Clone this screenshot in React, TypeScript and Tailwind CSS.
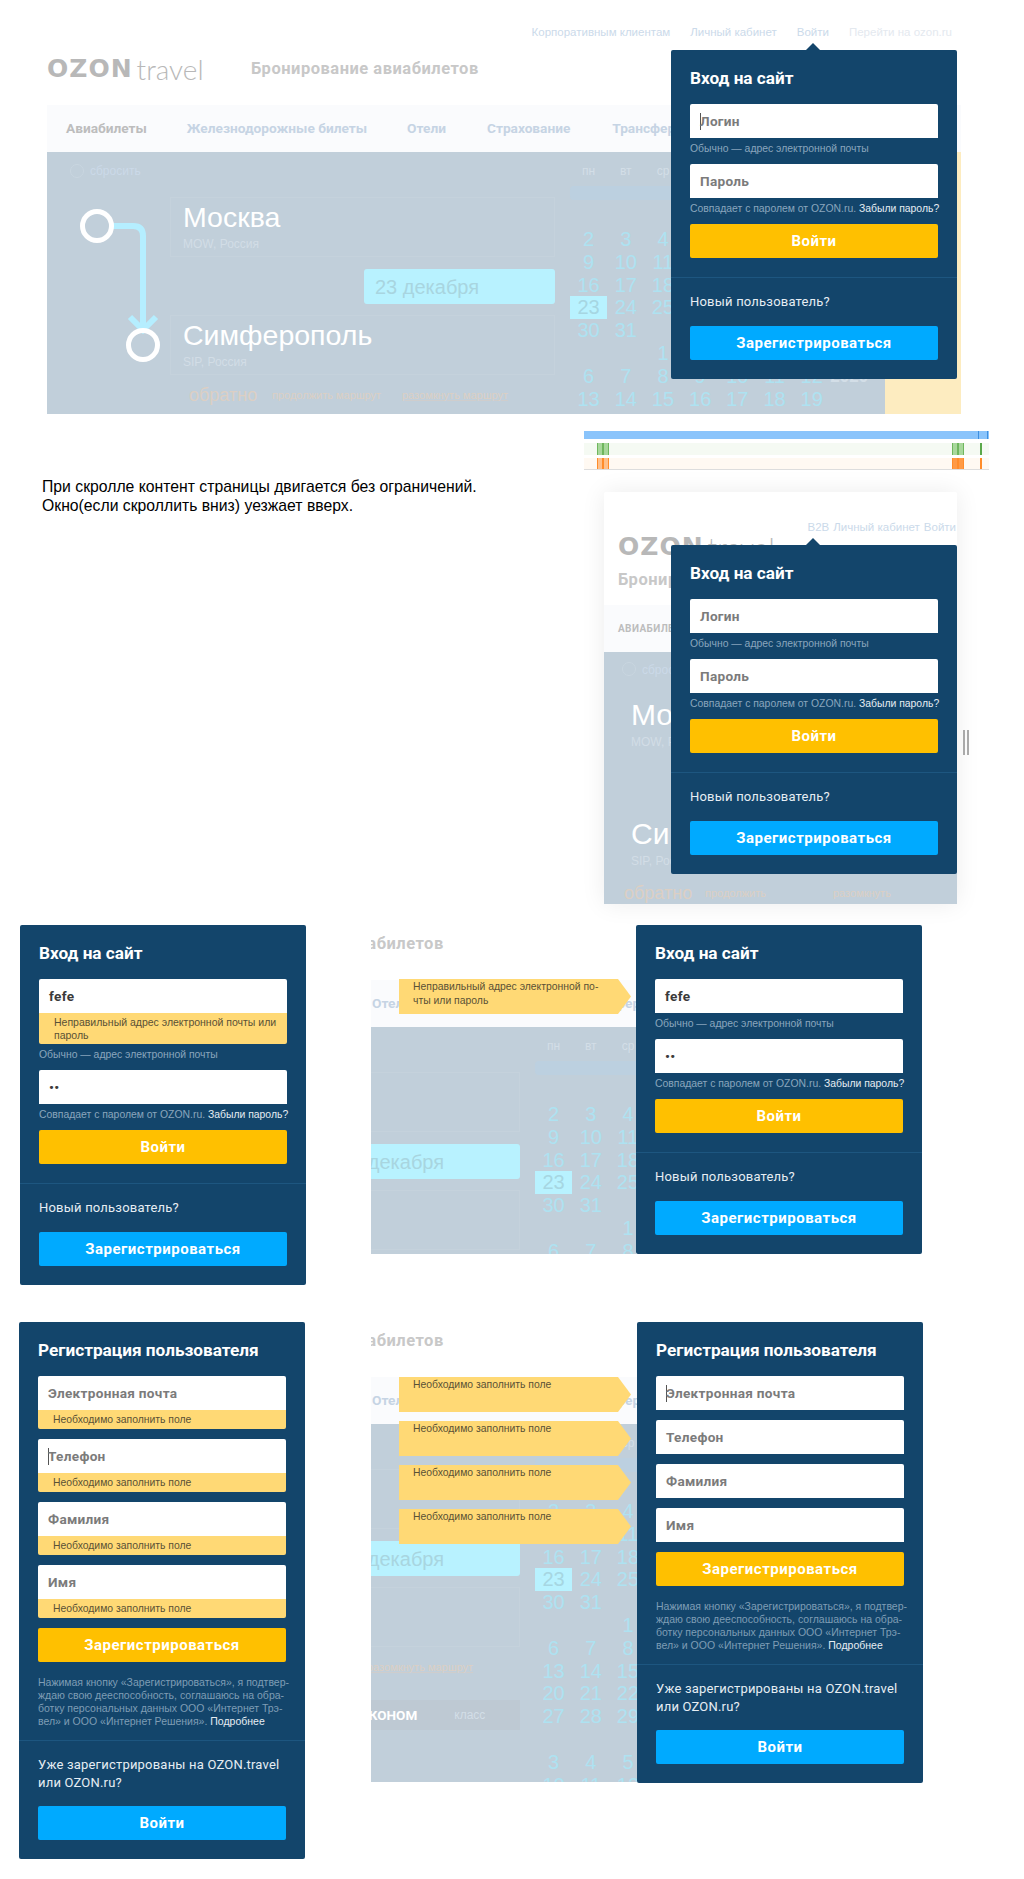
const WEEKDAYS = ["пн", "вт", "ср", "чт", "пт", "сб", "вс"];

const CALENDAR_ROWS: (string | number)[][] = [
  [2, 3, 4, 5, 6, 7, 8],
  [9, 10, 11, 12, 13, 14, 15],
  [16, 17, 18, 19, 20, 21, 22],
  [23, 24, 25, 26, 27, 28, 29],
  [30, 31, "", "", "", "", ""],
  ["", "", 1, 2, 3, 4, 5],
  [6, 7, 8, 9, 10, 11, 12, "2020"],
  [13, 14, 15, 16, 17, 18, 19],
  [20, 21, 22, 23, 24, 25, 26],
  [27, 28, 29, 30, 31, "", ""],
  ["", "", "", "", "", "", ""],
  [3, 4, 5, 6, 7, 8, 9],
  [10, 11, 12, 13, 14, 15, 16],
];

function Logo() {
  return (
    <div className="flex w-[204px] items-center">
      <span className="font-['DejaVu_Sans',sans-serif] text-[25px] leading-8 font-bold tracking-[1px] text-[#b8b8b8]">
        OZON
      </span>
      <span className="ml-[4px] font-[Lato,sans-serif] text-[28px] leading-8 font-light text-[#b8b8b8]">
        travel
      </span>
    </div>
  );
}

function TopLinks() {
  return (
    <div className="flex justify-end gap-5 pt-6 pr-[9px] font-['Liberation_Sans',sans-serif] text-[11.5px] leading-4 text-[#cbdaea]">
      <span>Корпоративным клиентам</span>
      <span>Личный кабинет</span>
      <span>Войти</span>
      <span className="text-[#e4e9ef]">Перейти на ozon.ru</span>
    </div>
  );
}

function RouteLine() {
  return (
    <svg width="123" height="190" viewBox="0 0 123 190" fill="none" className="shrink-0">
      <path d="M62 29h24q10 0 10 10v92" stroke="#b5eeff" strokeWidth="6" />
      <path d="M83 120l13 13 13-13" stroke="#b5eeff" strokeWidth="6" />
      <circle cx="50" cy="29" r="14.5" stroke="#fff" strokeWidth="5" />
      <circle cx="96" cy="148" r="14.5" stroke="#fff" strokeWidth="5" />
    </svg>
  );
}

function CityField({ city, sub, height }: { city: string; sub: string; height: string }) {
  return (
    <div className={`border border-[#c5d2dc] px-[12px] pt-[1px] font-['Liberation_Sans',sans-serif] ${height}`}>
      <div className="text-[28.5px] leading-9 text-white">{city}</div>
      <div className="mt-[1px] text-xs leading-4 text-[#d2dde6]">{sub}</div>
    </div>
  );
}

function Calendar() {
  return (
    <div className="w-[315px] shrink-0 font-['Liberation_Sans',sans-serif]">
      <div className="grid h-7 grid-cols-[repeat(8,37.2px)] pt-[10px] text-center text-xs leading-[18px] text-[#d3dee7]">
        {WEEKDAYS.map((day) => (
          <span key={day}>{day}</span>
        ))}
      </div>
      <div className="mt-[6px] h-[14px] w-[315px] rounded-sm bg-[#bcd0e0]" />
      <div className="mt-[28px]">
        {CALENDAR_ROWS.map((row, rowIndex) => (
          <div
            key={rowIndex}
            className="grid h-[22.8px] grid-cols-[repeat(8,37.2px)] text-center text-[20px] leading-[23px] text-[#aee2f1]"
          >
            {row.map((cell, cellIndex) => (
              <span
                key={cellIndex}
                className={
                  cell === "2020"
                    ? "text-[17px] font-bold text-[#d3dee7]"
                    : rowIndex === 3 && cell === 23
                      ? "bg-[#b8f2ff] text-[#a6d6e2]"
                      : ""
                }
              >
                {cell}
              </span>
            ))}
          </div>
        ))}
      </div>
    </div>
  );
}

// the same backdrop page, cropped differently behind each login panel
function Page() {
  return (
    <div className="w-[914px] font-[Roboto,sans-serif]">
      <div className="h-[105px]">
        <TopLinks />
        <div className="mt-[13px] flex h-8 items-center">
          <Logo />
          <span className="text-[16.5px] font-bold tracking-[0.5px] text-[#c8c8c8]">Бронирование авиабилетов</span>
        </div>
      </div>
      <div className="flex h-[47px] items-center gap-[38px] bg-[#fafbfd] pl-[19px] text-[13.7px] font-bold whitespace-nowrap text-[#c6d4e4]">
        <span className="mr-[2px] text-[#bdbdbd]">Авиабилеты</span>
        <span className="mr-[2px]">Железнодорожные билеты</span>
        <span className="mr-[3px]">Отели</span>
        <span className="mr-[4px]">Страхование</span>
        <span>Трансфер</span>
      </div>
      <div className="flex h-[500px] bg-[#c1cfda]">
        <div className="w-[523px] shrink-0">
          <div className="flex h-[45px] items-start gap-[6px] pt-3 pl-[23px] font-['Liberation_Sans',sans-serif] text-xs leading-[14px] text-[#cbd9e8]">
            <span className="size-[14px] rounded-full border border-[#c9d6e0]" />
            <span>сбросить</span>
          </div>
          <div className="flex">
            <RouteLine />
            <div className="w-[385px]">
              <CityField city="Москва" sub="MOW, Россия" height="h-[60px]" />
              <div className="mt-3 ml-auto flex h-[35px] w-[191px] items-center rounded-[3px] bg-[#b8f2ff] pl-[11px] font-['Liberation_Sans',sans-serif] text-xl text-[#a8d5e0]">
                23 декабря
              </div>
              <div className="mt-[11px]">
                <CityField city="Симферополь" sub="SIP, Россия" height="h-[60px]" />
              </div>
              <div className="mt-[10px] flex h-5 items-center pl-[19px] font-['Liberation_Sans',sans-serif] text-[11px] text-[#dccfc4]">
                <span className="w-[83px] text-lg">обратно</span>
                <span className="w-[130px]">продолжить маршрут</span>
                <span className="underline decoration-[#cfcdcc]">разомкнуть маршрут</span>
              </div>
              <div className="mt-[23px] flex h-[30px] items-center bg-[#bec9d3] pl-[225px]">
                <span className="text-[13.5px] font-bold text-white">ЭКОНОМ</span>
                <span className="ml-[37px] font-['Liberation_Sans',sans-serif] text-xs text-[#d3dee7]">класс</span>
              </div>
            </div>
          </div>
        </div>
        <Calendar />
        <div className="flex-1 bg-[#fdecc0]" />
      </div>
    </div>
  );
}

function PanelInput({ label, value, cursor }: { label?: string; value?: string; cursor?: boolean }) {
  return (
    <div className="flex h-[34px] items-center rounded-t-[2px] bg-white pl-[10px] text-[13.6px] font-bold tracking-[0.3px]">
      {cursor && <span className="-mr-[1px] h-[17px] w-[1px] bg-[#555]" />}
      <span className={value ? "text-[#3a3a3a]" : "text-[#7b7b7b]"}>{value ?? label}</span>
    </div>
  );
}

function PanelButton({ label, color }: { label: string; color: string }) {
  return (
    <div className={`flex h-[34px] items-center justify-center rounded-[2px] text-[15px] font-bold tracking-[0.5px] text-white ${color}`}>
      {label}
    </div>
  );
}

function Hint({ children }: { children: React.ReactNode }) {
  return (
    <div className="h-[26px] pt-[3px] font-['Liberation_Sans',sans-serif] text-[10.4px] leading-4 whitespace-nowrap text-[#8aa6bd]">
      {children}
    </div>
  );
}

function LoginPanel({
  login,
  password,
  error,
  cursor,
}: {
  login?: string;
  password?: string;
  error?: boolean;
  cursor?: boolean;
}) {
  return (
    <div className="w-[286px] rounded-[2px] bg-[#13456b]">
      <div className="px-[19px]">
        <div className="pt-[15px] pb-[13px] text-[17.2px] leading-[26px] font-bold text-white">Вход на сайт</div>
        <PanelInput label="Логин" value={login} cursor={cursor} />
        {error && (
          <div className="h-[31px] rounded-b-[2px] bg-[#ffd975] pl-[15px] font-['Liberation_Sans',sans-serif] text-[10.5px] leading-[13px] whitespace-nowrap text-[#5a5136]">
            <div className="pt-[3px]">
              Неправильный адрес электронной почты или
              <br />
              пароль
            </div>
          </div>
        )}
        <Hint>Обычно — адрес электронной почты</Hint>
        <PanelInput label="Пароль" value={password} />
        <Hint>
          Совпадает с паролем от OZON.ru. <span className="text-[#e6edf3]">Забыли пароль?</span>
        </Hint>
        <PanelButton label="Войти" color="bg-[#ffc000]" />
      </div>
      <div className="mt-[19px] border-t border-[#1d5680] px-[19px] pt-[14px] pb-[19px]">
        <div className="text-[13px] leading-5 tracking-[0.2px] text-[#e6edf3]">Новый пользователь?</div>
        <div className="mt-[14px]">
          <PanelButton label="Зарегистрироваться" color="bg-[#00aaff]" />
        </div>
      </div>
    </div>
  );
}

const REGISTER_FIELDS = ["Электронная почта", "Телефон", "Фамилия", "Имя"];

function RegisterPanel({ withErrors, cursorIndex }: { withErrors?: boolean; cursorIndex: number }) {
  return (
    <div className="w-[286px] rounded-[2px] bg-[#13456b]">
      <div className="px-[19px]">
        <div className="pt-[15px] pb-[13px] text-[17.2px] leading-[26px] font-bold text-white">
          Регистрация пользователя
        </div>
        {REGISTER_FIELDS.map((field, index) => (
          <div key={field} className="mb-[10px]">
            <PanelInput label={field} cursor={index === cursorIndex} />
            {withErrors && (
              <div className="h-[19px] rounded-b-[2px] bg-[#ffd975] pl-[15px] font-['Liberation_Sans',sans-serif] text-[10.4px] leading-[19px] text-[#5a5136]">
                Необходимо заполнить поле
              </div>
            )}
          </div>
        ))}
        <PanelButton label="Зарегистрироваться" color="bg-[#ffc000]" />
        <div className="mt-[14px] font-['Liberation_Sans',sans-serif] text-[10.5px] leading-[13px] whitespace-nowrap text-[#7f9db5]">
          Нажимая кнопку «Зарегистрироваться», я подтвер-
          <br />
          ждаю свою дееспособность, соглашаюсь на обра-
          <br />
          ботку персональных данных ООО «Интернет Трэ-
          <br />
          вел» и ООО «Интернет Решения». <span className="text-[#e6edf3]">Подробнее</span>
        </div>
      </div>
      <div className="mt-3 border-t border-[#1d5680] px-[19px] pt-[15px] pb-[19px]">
        <div className="text-[13px] leading-[18px] tracking-[0.2px] whitespace-nowrap text-[#e6edf3]">
          Уже зарегистрированы на OZON.travel
          <br />
          или OZON.ru?
        </div>
        <div className="mt-[14px]">
          <PanelButton label="Войти" color="bg-[#00aaff]" />
        </div>
      </div>
    </div>
  );
}

function ErrorTip({ children }: { children: React.ReactNode }) {
  return (
    <div className="h-[35px] w-[232px] bg-[#ffd975] pt-[1px] pl-[14px] font-['Liberation_Sans',sans-serif] text-[10.4px] leading-[14px] text-[#5a5136] [clip-path:polygon(0_0,calc(100%-13px)_0,100%_50%,calc(100%-13px)_100%,0_100%)]">
      {children}
    </div>
  );
}

function TimelineMark({ fill, stripe }: { fill: string; stripe: string }) {
  return (
    <span className={`flex w-3 justify-between ${fill}`}>
      <span className={`w-[1px] ${stripe}`} />
      <span className={`w-[2px] ${stripe}`} />
      <span className={`w-[1px] ${stripe}`} />
    </span>
  );
}

function Timeline() {
  return (
    <div className="w-[405px]">
      <div className="flex h-2 justify-end gap-[8px] bg-[#8ac4fb] pr-[1px]">
        <span className="w-[1px] bg-[#3d8fe0]" />
        <span className="w-[1px] bg-[#3d8fe0]" />
      </div>
      <div className="mt-1 flex h-3 bg-[#f5faf3]">
        <span className="ml-[13px] flex">
          <TimelineMark fill="bg-[#a8d89c]" stripe="bg-[#6fb65e]" />
        </span>
        <span className="ml-[343px] flex">
          <TimelineMark fill="bg-[#a8d89c]" stripe="bg-[#6fb65e]" />
        </span>
        <span className="ml-4 w-[2px] bg-[#5aa84a]" />
      </div>
      <div className="mt-[3px] flex h-3 border-b border-[#dddddd] bg-[#fff9f2]">
        <span className="ml-[13px] flex">
          <TimelineMark fill="bg-[#ffc08a]" stripe="bg-[#ff8c2a]" />
        </span>
        <span className="ml-[343px] flex">
          <TimelineMark fill="bg-[#ff9a45]" stripe="bg-[#ff8c2a]" />
        </span>
        <span className="ml-4 w-[2px] bg-[#ff8c2a]" />
      </div>
    </div>
  );
}

function NarrowPage() {
  return (
    <div className="h-[412px] w-[353px] overflow-hidden rounded-t-[2px] bg-white font-[Roboto,sans-serif] shadow-[0_0_24px_rgba(0,0,0,0.08)]">
      <div className="h-[113px] px-[14px]">
        <div className="-mr-[13px] flex justify-end gap-1 pt-[27px] font-['Liberation_Sans',sans-serif] text-[11.5px] leading-4 text-[#cbdaea]">
          <span>B2B</span>
          <span>Личный кабинет</span>
          <span>Войти</span>
        </div>
        <div className="-mt-[4px] flex h-8 items-center">
          <Logo />
        </div>
        <div className="mt-[5px] text-[16.5px] leading-6 font-bold tracking-[0.5px] whitespace-nowrap text-[#c8c8c8]">
          Бронирование авиабилетов
        </div>
      </div>
      <div className="flex h-[47px] items-center bg-[#fafbfd] pl-[14px] text-[10px] font-bold tracking-[0.4px] text-[#bdbdbd]">
        АВИАБИЛЕТЫ
      </div>
      <div className="h-[252px] bg-[#c1cfda] pl-[27px] font-['Liberation_Sans',sans-serif] whitespace-nowrap">
        <div className="-ml-[9px] flex h-[45px] items-start gap-[6px] pt-[10px] text-xs text-[#cbd9e8]">
          <span className="size-[14px] rounded-full border border-[#c9d6e0]" />
          <span>сбросить</span>
        </div>
        <div className="text-[30px] leading-9 text-white">Москва</div>
        <div className="mt-[1px] text-xs leading-4 text-[#d2dde6]">MOW, Россия</div>
        <div className="mt-[66px] text-[30px] leading-9 text-white">Симферополь</div>
        <div className="mt-[1px] text-xs leading-4 text-[#d2dde6]">SIP, Россия</div>
        <div className="mt-[14px] -ml-[7px] flex h-5 items-center text-[11px] text-[#dccfc4]">
          <span className="w-[81px] text-lg">обратно</span>
          <span className="w-[128px]">продолжить</span>
          <span>разомкнуть</span>
        </div>
      </div>
    </div>
  );
}

export default function App() {
  return (
    <div className="relative h-[1879px] w-[1024px] overflow-hidden bg-white font-[Roboto,sans-serif]">
      {/* экран 1: вход */}
      <div className="absolute top-0 left-[47px] h-[414px] w-[914px] overflow-hidden">
        <Page />
      </div>
      <div className="absolute top-[43px] left-[806px] size-0 border-x-[7px] border-b-[7px] border-x-transparent border-b-[#13456b]" />
      <div className="absolute top-[50px] left-[671px]">
        <LoginPanel cursor />
      </div>

      <div className="absolute top-[478px] left-[42px] font-['Liberation_Sans',sans-serif] text-[15.75px] leading-[18.5px] text-black">
        При скролле контент страницы двигается без ограничений.
        <br />
        Окно(если скроллить вниз) уезжает вверх.
      </div>

      {/* экран 2: узкое окно */}
      <div className="absolute top-[431px] left-[584px]">
        <Timeline />
      </div>
      <div className="absolute top-[492px] left-[604px]">
        <NarrowPage />
      </div>
      <div className="absolute top-[538px] left-[806px] size-0 border-x-[7px] border-b-[7px] border-x-transparent border-b-[#13456b]" />
      <div className="absolute top-[545px] left-[671px]">
        <LoginPanel />
      </div>
      <div className="absolute top-[730px] left-[963px] flex h-[25px] gap-[2px]">
        <span className="w-[2px] bg-[#aaaaaa]" />
        <span className="w-[2px] bg-[#aaaaaa]" />
      </div>

      {/* экран 3: ошибка входа под полем */}
      <div className="absolute top-[925px] left-[20px]">
        <LoginPanel login="fefe" password="••" error />
      </div>

      {/* экран 4: ошибка входа слева */}
      <div className="absolute top-[925px] left-[371px] h-[329px] w-[265px] overflow-hidden">
        <div className="-mt-[50px] -ml-[359px]">
          <Page />
        </div>
      </div>
      <div className="absolute top-[979px] left-[399px]">
        <ErrorTip>
          Неправильный адрес электронной по-
          <br />
          чты или пароль
        </ErrorTip>
      </div>
      <div className="absolute top-[925px] left-[636px]">
        <LoginPanel login="fefe" password="••" />
      </div>

      {/* экран 5: регистрация, ошибки под полями */}
      <div className="absolute top-[1322px] left-[19px]">
        <RegisterPanel withErrors cursorIndex={1} />
      </div>

      {/* экран 6: регистрация, ошибки слева */}
      <div className="absolute top-[1322px] left-[371px] h-[460px] w-[266px] overflow-hidden">
        <div className="-mt-[50px] -ml-[359px]">
          <Page />
        </div>
      </div>
      <div className="absolute top-[1377px] left-[399px] flex flex-col gap-[9px]">
        {REGISTER_FIELDS.map((field) => (
          <ErrorTip key={field}>Необходимо заполнить поле</ErrorTip>
        ))}
      </div>
      <div className="absolute top-[1322px] left-[637px]">
        <RegisterPanel cursorIndex={0} />
      </div>
    </div>
  );
}
